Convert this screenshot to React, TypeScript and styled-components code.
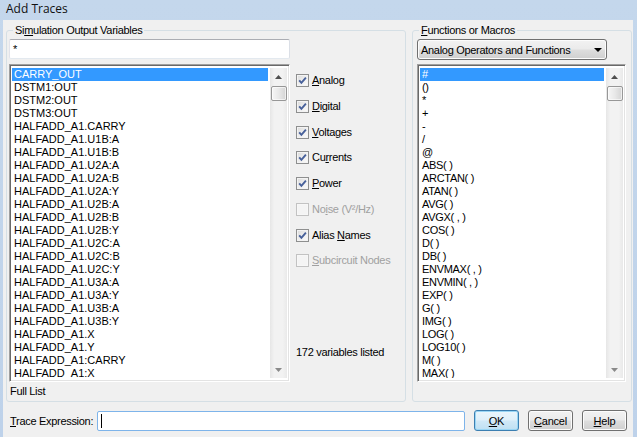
import styled, { createGlobalStyle } from "styled-components";
import type { ReactNode } from "react";

const GlobalStyle = createGlobalStyle`
  html, body {
    margin: 0;
    padding: 0;
  }
  body {
    background: #c2d5eb;
    font-family: "Liberation Sans", Arial, sans-serif;
    font-size: 11px;
    color: #000;
  }
`;

const variables = [
  "CARRY_OUT",
  "DSTM1:OUT",
  "DSTM2:OUT",
  "DSTM3:OUT",
  "HALFADD_A1.CARRY",
  "HALFADD_A1.U1B:A",
  "HALFADD_A1.U1B:B",
  "HALFADD_A1.U2A:A",
  "HALFADD_A1.U2A:B",
  "HALFADD_A1.U2A:Y",
  "HALFADD_A1.U2B:A",
  "HALFADD_A1.U2B:B",
  "HALFADD_A1.U2B:Y",
  "HALFADD_A1.U2C:A",
  "HALFADD_A1.U2C:B",
  "HALFADD_A1.U2C:Y",
  "HALFADD_A1.U3A:A",
  "HALFADD_A1.U3A:Y",
  "HALFADD_A1.U3B:A",
  "HALFADD_A1.U3B:Y",
  "HALFADD_A1.X",
  "HALFADD_A1.Y",
  "HALFADD_A1:CARRY",
  "HALFADD_A1:X",
];

const functions = [
  "#",
  "()",
  "*",
  "+",
  "-",
  "/",
  "@",
  "ABS( )",
  "ARCTAN( )",
  "ATAN( )",
  "AVG( )",
  "AVGX( , )",
  "COS( )",
  "D( )",
  "DB( )",
  "ENVMAX( , )",
  "ENVMIN( , )",
  "EXP( )",
  "G( )",
  "IMG( )",
  "LOG( )",
  "LOG10( )",
  "M( )",
  "MAX( )",
];

type Option = { label: ReactNode; checked: boolean; disabled?: boolean };

const options: Option[] = [
  { label: <><u>A</u>nalog</>, checked: true },
  { label: <><u>D</u>igital</>, checked: true },
  { label: <><u>V</u>oltages</>, checked: true },
  { label: <>Cu<u>r</u>rents</>, checked: true },
  { label: <><u>P</u>ower</>, checked: true },
  { label: <>No<u>i</u>se (V²/Hz)</>, checked: false, disabled: true },
  { label: <>Alias <u>N</u>ames</>, checked: true },
  { label: <><u>S</u>ubcircuit Nodes</>, checked: false, disabled: true },
];

const Arrow = ({ dir, color }: { dir: "up" | "down"; color: string }) => (
  <svg width="7" height="4" viewBox="0 0 7 4">
    <polygon points={dir === "up" ? "3.5,0 7,4 0,4" : "0,0 7,0 3.5,4"} fill={color} />
  </svg>
);

const ScrollBar = () => (
  <Scroll>
    <ScrollButton>
      <Arrow dir="up" color="#4f4f4f" />
    </ScrollButton>
    <Thumb />
    <ScrollSpace />
    <ScrollButton>
      <Arrow dir="down" color="#8a8a8a" />
    </ScrollButton>
  </Scroll>
);

const List = ({ items, width, tight }: { items: string[]; width: number; tight?: boolean }) => (
  <ListBox $width={width}>
    <Items>
      {items.map((item, i) => (
        <ListItem key={item} $selected={i === 0} $tight={tight}>
          {item}
        </ListItem>
      ))}
    </Items>
    <ScrollBar />
  </ListBox>
);

const App = () => {
  return (
    <>
      <GlobalStyle />
      <Window>
        <TitleBar>Add Traces</TitleBar>
        <Body>
          <Groups>
            <GroupBox $width={400}>
              <Legend>
                Si<u>m</u>ulation Output Variables
              </Legend>
              <LeftSplit>
                <LeftCol>
                  <TextField>*</TextField>
                  <List items={variables} width={281} />
                  <FullList>Full List</FullList>
                </LeftCol>
                <MidCol>
                  <CheckList>
                    {options.map((o, i) => (
                      <CheckRow key={i}>
                        <CheckBox $disabled={o.disabled}>
                          {o.checked && (
                            <svg width="11" height="11" viewBox="0 0 11 11">
                              <path
                                d="M2.2 5.4 L4.4 7.9 L8.9 2.6"
                                fill="none"
                                stroke="#47609a"
                                strokeWidth="1.9"
                              />
                            </svg>
                          )}
                        </CheckBox>
                        <CheckLabel $disabled={o.disabled}>{o.label}</CheckLabel>
                      </CheckRow>
                    ))}
                  </CheckList>
                  <Stats>172 variables listed</Stats>
                </MidCol>
              </LeftSplit>
            </GroupBox>
            <GroupBox $width={220}>
              <Legend>
                <u>F</u>unctions or Macros
              </Legend>
              <RightSplit>
                <Dropdown>
                  <span>Analog Operators and Functions</span>
                  <svg width="8" height="4" viewBox="0 0 8 4">
                    <polygon points="0,0 8,0 4,4" fill="#000" />
                  </svg>
                </Dropdown>
                <List items={functions} width={209} tight />
              </RightSplit>
            </GroupBox>
          </Groups>
          <BottomRow>
            <FieldLabel>
              <u>T</u>race Expression:
            </FieldLabel>
            <TraceField>
              <Caret />
            </TraceField>
            <Button $default>
              <u>O</u>K
            </Button>
            <Button>
              <u>C</u>ancel
            </Button>
            <Button>
              <u>H</u>elp
            </Button>
          </BottomRow>
        </Body>
      </Window>
    </>
  );
};

const Window = styled.div`
  width: 637px;
  height: 437px;
  display: flex;
  flex-direction: column;
  background: linear-gradient(to bottom, #c4d7ec, #bed2ea);
  overflow: hidden;
`;

const TitleBar = styled.div`
  height: 20px;
  flex: none;
  box-sizing: border-box;
  padding: 0 0 2px 6px;
  font: 12px/18px "Open Sans", "Noto Sans", sans-serif;
  color: #111;
`;

const Body = styled.div`
  flex: 1;
  margin: 0 4px 0 3px;
  padding: 4px 1px 0 3px;
  background: #f0f0f0;
  display: flex;
  flex-direction: column;
`;

const Groups = styled.div`
  display: flex;
  gap: 6px;
  height: 378px;
  flex: none;
`;

const GroupBox = styled.fieldset<{ $width: number }>`
  margin: 0;
  padding: 0;
  min-width: 0;
  box-sizing: border-box;
  width: ${(p) => p.$width}px;
  height: 100%;
  border: 1px solid #d5dfe5;
  border-radius: 3px;
`;

const Legend = styled.legend`
  margin-left: 6px;
  padding: 0 2px;
  line-height: 13px;
  letter-spacing: -0.3px;
`;

const LeftSplit = styled.div`
  display: flex;
  padding: 2px 0 0 2px;
`;

const LeftCol = styled.div`
  width: 281px;
  display: flex;
  flex-direction: column;
`;

const TextField = styled.div`
  height: 20px;
  box-sizing: border-box;
  border: 1px solid;
  border-color: #abadb3 #dbdfe6 #e3e9ef #e2e3ea;
  border-radius: 2px;
  background: #fff;
  padding: 2px 3px;
  line-height: 14px;
  margin-bottom: 5px;
`;

const ListBox = styled.div<{ $width: number }>`
  width: ${(p) => p.$width}px;
  height: 318px;
  box-sizing: border-box;
  display: flex;
  background: #fff;
  border: 1px solid;
  border-color: #a0a0a0 #ffffff #ffffff #a0a0a0;
  box-shadow: inset 1px 1px 0 #696969, inset -1px -1px 0 #e3e3e3;
  padding: 3px 2px 3px 2px;
`;

const Items = styled.div`
  flex: 1;
  overflow: hidden;
  margin-right: 2px;
`;

const ListItem = styled.div<{ $selected?: boolean; $tight?: boolean }>`
  height: 13px;
  line-height: 13px;
  padding-left: 2px;
  white-space: nowrap;
  letter-spacing: ${(p) => (p.$tight ? "-0.3px" : "0")};
  background: ${(p) => (p.$selected ? "#3399ff" : "transparent")};
  color: ${(p) => (p.$selected ? "#fff" : "#000")};
`;

const Scroll = styled.div`
  width: 17px;
  flex: none;
  display: flex;
  flex-direction: column;
  background: linear-gradient(to right, #e6e6e6, #f2f2f2 25%, #f2f2f2 75%, #e9e9e9);
`;

const ScrollButton = styled.div`
  height: 17px;
  flex: none;
  display: flex;
  align-items: center;
  justify-content: center;
`;

const Thumb = styled.div`
  height: 15px;
  margin: 1px 0 0 1px;
  box-sizing: border-box;
  border: 1px solid #979797;
  border-radius: 2px;
  background: linear-gradient(to right, #f6f6f6, #e8e8e8 50%, #d4d4d4);
  box-shadow: inset 0 0 0 1px rgba(255, 255, 255, 0.6);
`;

const ScrollSpace = styled.div`
  flex: 1;
`;

const FullList = styled.div`
  margin-top: 3px;
  padding-left: 1px;
  line-height: 13px;
  letter-spacing: -0.3px;
`;

const MidCol = styled.div`
  margin-left: 6px;
  padding-top: 35px;
  display: flex;
  flex-direction: column;
`;

const CheckList = styled.div`
  display: flex;
  flex-direction: column;
  gap: 12.75px;
`;

const CheckRow = styled.div`
  display: flex;
  align-items: center;
  height: 13px;
`;

const CheckBox = styled.span<{ $disabled?: boolean }>`
  width: 13px;
  height: 13px;
  flex: none;
  box-sizing: border-box;
  display: flex;
  align-items: center;
  justify-content: center;
  border: 1px solid ${(p) => (p.$disabled ? "#c2c2c2" : "#8e8f8f")};
  background: ${(p) =>
    p.$disabled ? "#f4f4f4" : "linear-gradient(135deg, #d9d9d9 0%, #eeeeee 50%, #fbfbfb 100%)"};
  box-shadow: inset 0 0 0 1px ${(p) => (p.$disabled ? "#f7f7f7" : "#f3f3f3")};
`;

const CheckLabel = styled.span<{ $disabled?: boolean }>`
  margin-left: 3px;
  line-height: 13px;
  white-space: nowrap;
  letter-spacing: -0.3px;
  color: ${(p) => (p.$disabled ? "#a0a0a0" : "#000")};
`;

const Stats = styled.div`
  margin-top: 79px;
  line-height: 13px;
  letter-spacing: -0.3px;
`;

const RightSplit = styled.div`
  display: flex;
  flex-direction: column;
  padding: 2px 0 0 4px;
`;

const Dropdown = styled.div`
  width: 190px;
  height: 21px;
  box-sizing: border-box;
  display: flex;
  align-items: center;
  justify-content: space-between;
  padding: 0 4px 0 3px;
  margin-bottom: 4px;
  border: 1px solid #707070;
  border-radius: 3px;
  background: linear-gradient(to bottom, #f2f2f2, #ebebeb 45%, #dddddd 55%, #cfcfcf);
  box-shadow: inset 0 0 0 1px #fcfcfc;
  letter-spacing: -0.3px;
  white-space: nowrap;
`;

const BottomRow = styled.div`
  display: flex;
  align-items: center;
  height: 21px;
  margin-top: 8px;
  padding: 0 5px 0 4px;
`;

const FieldLabel = styled.span`
  flex: none;
  letter-spacing: -0.3px;
  white-space: nowrap;
`;

const TraceField = styled.div`
  flex: 1;
  height: 20px;
  margin: 0 9px 0 4px;
  box-sizing: border-box;
  display: flex;
  align-items: center;
  padding-left: 3px;
  border: 1px solid #7eb4ea;
  border-radius: 2px;
  background: #fff;
`;

const Caret = styled.span`
  width: 1px;
  height: 14px;
  background: #000;
`;

const Button = styled.div<{ $default?: boolean }>`
  width: 45px;
  height: 21px;
  flex: none;
  box-sizing: border-box;
  display: flex;
  align-items: center;
  justify-content: center;
  border: 1px solid ${(p) => (p.$default ? "#3c7fb1" : "#707070")};
  border-radius: 3px;
  background: ${(p) =>
    p.$default
      ? "linear-gradient(to bottom, #eaf6fd, #e0f0fa 45%, #cfe8f7 55%, #bfe0f3)"
      : "linear-gradient(to bottom, #f2f2f2, #ebebeb 45%, #dddddd 55%, #cfcfcf)"};
  box-shadow: inset 0 0 0 1px ${(p) => (p.$default ? "#9ad6f5" : "#fcfcfc")};
  letter-spacing: -0.2px;
  & + & {
    margin-left: 9px;
  }
`;

export default App;
